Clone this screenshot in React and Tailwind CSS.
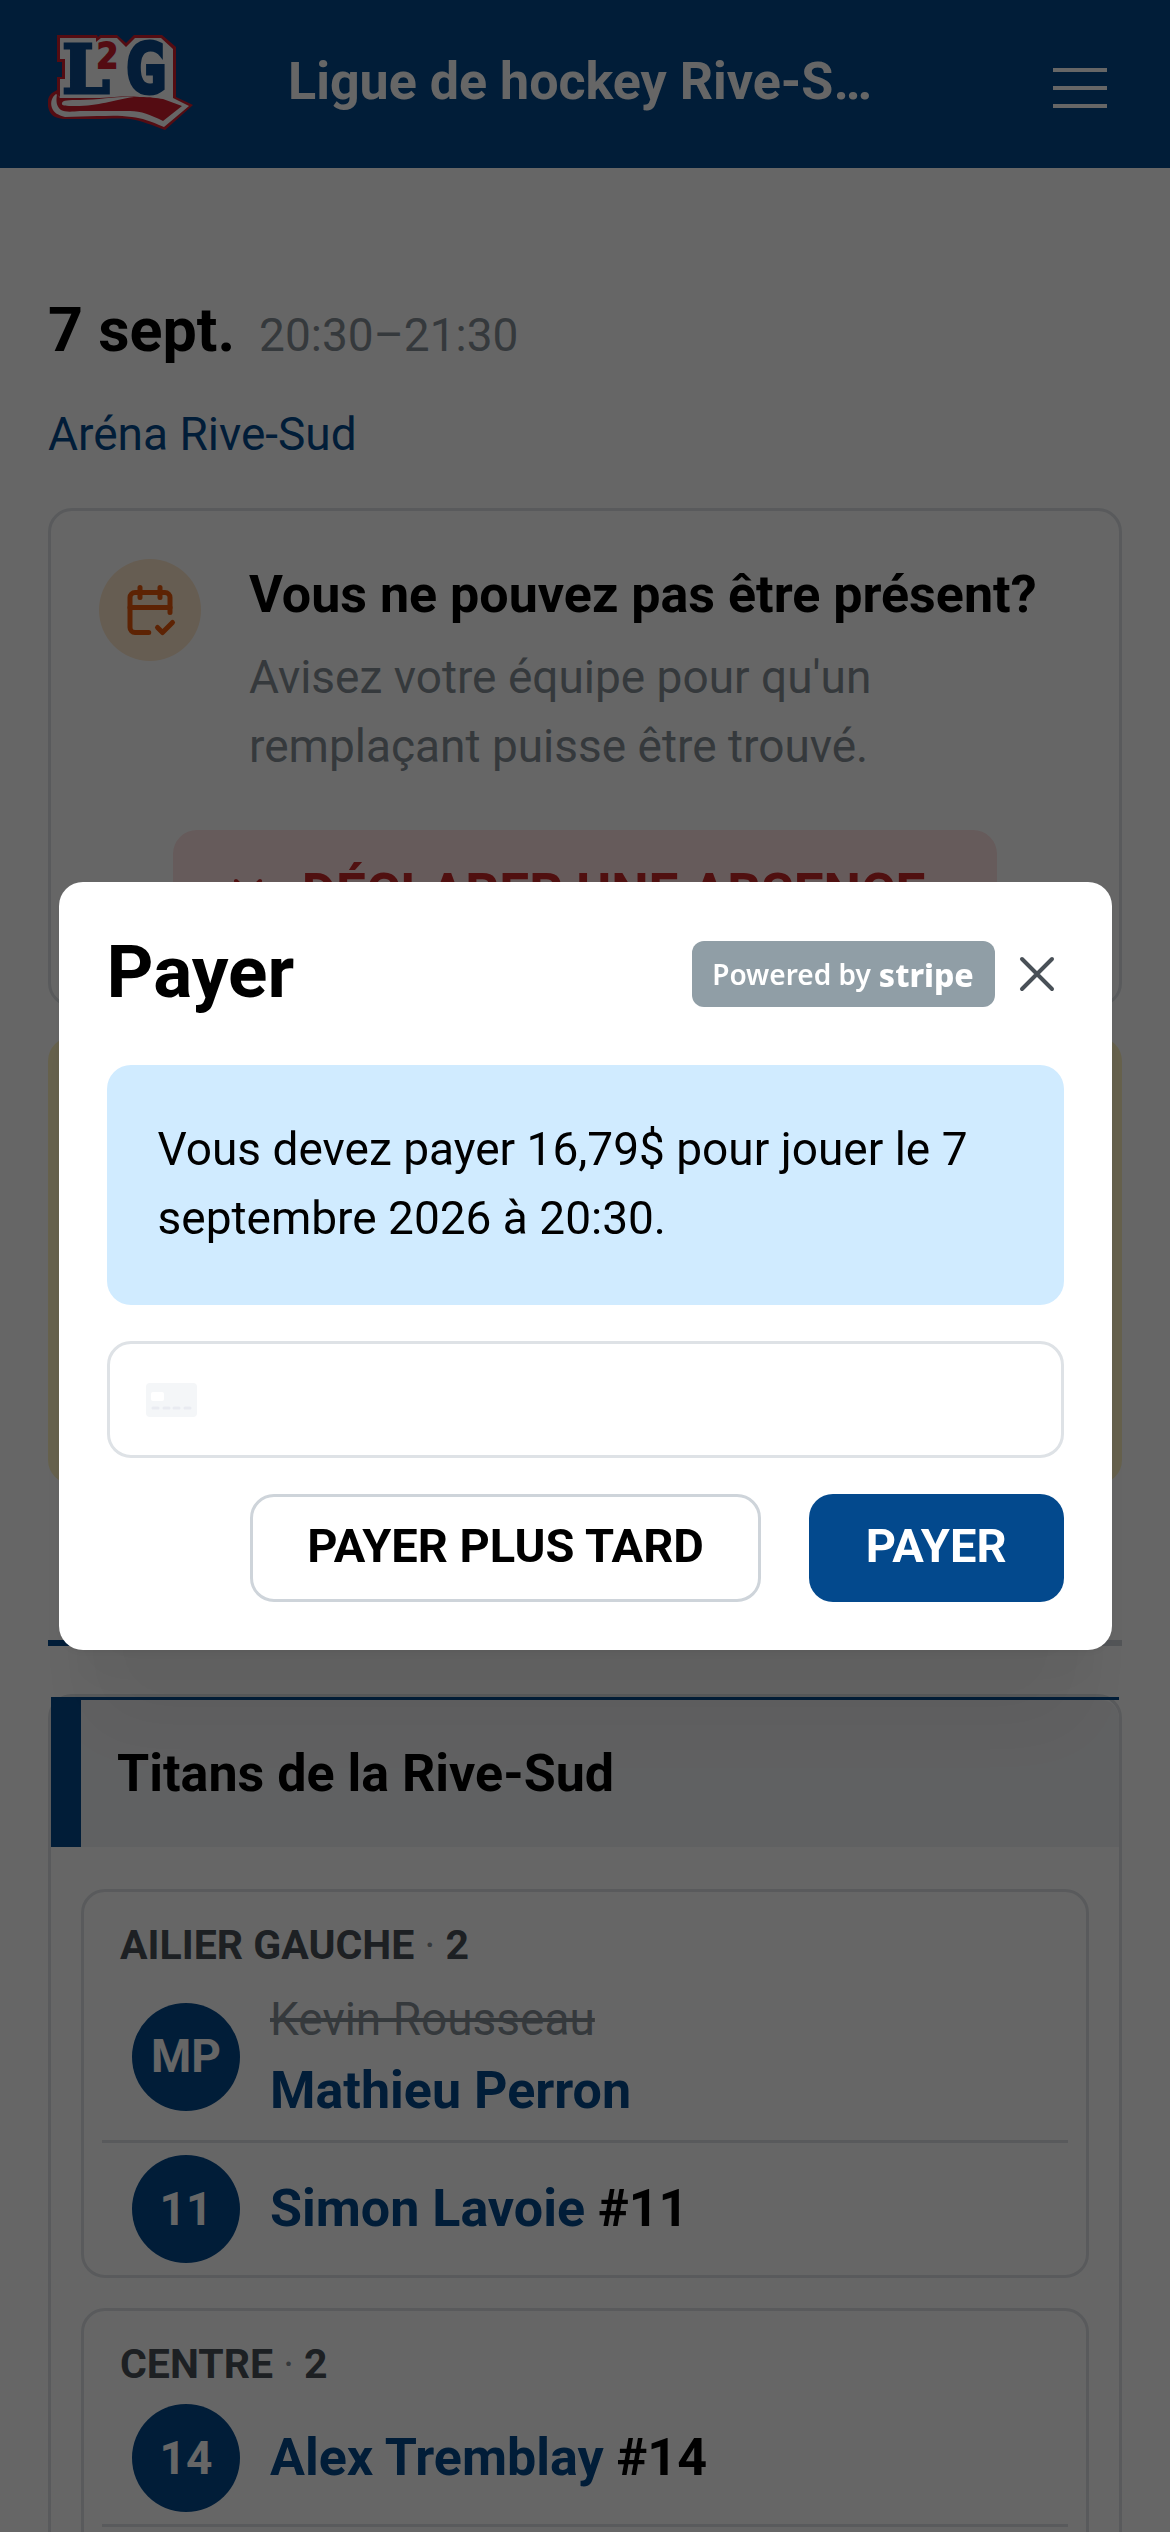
import { IconContext } from 'react-icons'
import { TbCalendarCheck, TbX } from 'react-icons/tb'

const POSITIONS = [
    {
        label: 'AILIER GAUCHE',
        players: [
            { badge: 'MP', name: 'Mathieu Perron', replaces: 'Kevin Rousseau' },
            { badge: '11', name: 'Simon Lavoie', number: 11 },
        ],
    },
    {
        label: 'CENTRE',
        players: [
            { badge: '14', name: 'Alex Tremblay', number: 14 },
            { badge: '', name: '' },
        ],
    },
]

export default function App() {
    return (
        <IconContext.Provider value={{ 'aria-hidden': true }}>
            <div className="h-screen overflow-hidden bg-white text-black text-[46px] leading-[69px] font-[Roboto,sans-serif]">
                <Header />
                <main className="px-12 pt-[120px]">
                    <div className="flex items-baseline gap-6">
                        <h1 className="text-[61px] leading-[84px] font-bold">7 sept.</h1>
                        <span className="text-[#868e96]">20:30–21:30</span>
                    </div>
                    <a href="#arena" className="mt-7 block w-fit text-[#03498d]">Aréna Rive-Sud</a>

                    <AbsenceCard />
                    <div className="mt-[30px] h-[447px] rounded-3xl bg-[#fff3bf]" />

                    {/* Tabs */}
                    <div className="mt-[156px] flex h-[6px] bg-[#ced4da]">
                        <div className="w-1/2 bg-[#03498d]" />
                    </div>

                    <TeamCard />
                </main>
            </div>
            <PayModal />
        </IconContext.Provider>
    )
}

function Header() {
    return (
        <header className="flex h-[168px] items-center bg-[#03498d] px-12 text-white">
            <a href="#accueil" className="w-[240px] shrink-0" aria-label="Accueil">
                <Logo />
            </a>
            <p className="flex-1 truncate pb-1 text-[52px] leading-[78px] font-bold">Ligue de hockey Rive-Sud</p>
            <div className="flex w-[240px] shrink-0 justify-end pr-[15px]">
                <button className="flex flex-col gap-[14px] pt-2" aria-label="Menu">
                    <span className="h-1 w-[54px] bg-white" />
                    <span className="h-1 w-[54px] bg-white" />
                    <span className="h-1 w-[54px] bg-white" />
                </button>
            </div>
        </header>
    )
}

function Logo() {
    return (
        <svg viewBox="48 24 146 120" className="h-[120px] w-[146px]" fontWeight="bold">
            {/* Red outline */}
            <path
                d="M57 35H97L98 37L100 35H117L126 43L134 35H162L176 47V97L193 105L165 130C152 125 142 121 130 119C115 118 108 119 97 119H63C56 118 51 116 49 110C47 104 47 97 52 93L57 90V77H62V62H57Z"
                fill="#d31f2f"
            />
            {/* White backing */}
            <path
                d="M60 38H96V42L101 38H117L126 47L135 38H161L173 49V98L189 106L164 127C150 121 142 118 132 117C118 115 108 116 97 116L65 117C58 115 54 113 52 108C50 102 52 97 56 94L60 97V79H65V59H60Z"
                fill="#fff"
            />
            <g fill="#0b4a8c" stroke="#0b4a8c" strokeWidth="3">
                <text x="62" y="93" fontFamily="DejaVu Serif" fontSize="68">L</text>
                <text x="125" y="93" fontFamily="DejaVu Sans Mono" fontSize="69">G</text>
            </g>
            <text x="97" y="68" fontFamily="DejaVu Sans Mono" fontSize="35" fill="#d31f2f" stroke="#d31f2f" strokeWidth="2">2</text>
            {/* Ribbon */}
            <path
                d="M57 94L60 98H100C114 97 126 96 140 97C150 97 157 98 163 99L182 106L163 121C151 115 141 111 130 111H80C70 112 65 112 61 110C56 106 56 101 57 94Z"
                fill="#d31f2f"
            />
            <path d="M62 103C63 100 68 100 80 100C100 100 118 96 134 97C112 100 100 106 75 106C66 106 61 106 62 103Z" fill="#fff" />
        </svg>
    )
}

function AbsenceCard() {
    return (
        <section className="mt-[39px] rounded-3xl border-3 border-[#dee2e6] p-12">
            <div className="flex gap-12">
                <div className="flex size-[102px] shrink-0 items-center justify-center rounded-full bg-[#ffe8cc] text-[#e8590c]">
                    <TbCalendarCheck size={60} />
                </div>
                <div>
                    <h2 className="text-[52px] leading-[72px] font-bold">Vous ne pouvez pas être présent?</h2>
                    <p className="mt-3 text-[#868e96]">Avisez votre équipe pour qu'un remplaçant puisse être trouvé.</p>
                </div>
            </div>
            <button className="mx-auto mt-[49px] flex h-[126px] items-center gap-[30px] rounded-3xl bg-[#ffe3e3] pr-[72px] pl-[51px] text-[53px] font-bold text-[#c92a2a]">
                <TbX size={48} />
                DÉCLARER UNE ABSENCE
            </button>
        </section>
    )
}

function TeamCard() {
    return (
        <section className="mt-12 rounded-3xl border-3 border-[#dee2e6]">
            <div className="border-t-3 border-l-30 border-[#03498d]">
                <h2 className="rounded-tr-[18px] bg-[#f1f3f5] p-9 text-[52px] leading-[75px] font-bold">Titans de la Rive-Sud</h2>
            </div>
            <div className="space-y-[30px] px-[30px] pt-[42px] pb-[30px]">
                {POSITIONS.map(position => (
                    <div key={position.label} className="rounded-3xl border-3 border-[#dee2e6]">
                        <h3 className="px-9 pt-[25px] text-[41px] leading-[56px] font-bold text-[#495057]">
                            {position.label} <span className="font-normal text-[#868e96]">·</span> {position.players.length}
                        </h3>
                        <ul className="mx-[18px] divide-y-3 divide-[#dee2e6]">
                            {position.players.map(player => (
                                <PlayerRow key={player.name} player={player} />
                            ))}
                        </ul>
                    </div>
                ))}
            </div>
        </section>
    )
}

function PlayerRow({ player }) {
    return (
        <li className="flex items-center gap-[30px] px-[30px] py-3">
            <div className="flex size-[108px] shrink-0 items-center justify-center rounded-full bg-[#03498d] font-bold text-white">
                {player.badge}
            </div>
            <div>
                {player.replaces && <p className="text-[#868e96] line-through">{player.replaces}</p>}
                <p className="text-[52px] leading-[74px] font-bold">
                    <a href="#joueur" className="text-[#03498d]">{player.name}</a>
                    {player.number && ` #${player.number}`}
                </p>
            </div>
        </li>
    )
}

function PayModal() {
    return (
        <div className="fixed inset-0 flex items-center justify-center bg-black/60 text-[46px] leading-[69px] text-black font-[Roboto,sans-serif]">
            <div
                role="dialog"
                aria-labelledby="pay-title"
                className="w-[90%] rounded-3xl bg-white p-12 shadow-[0_3px_9px_rgba(0,0,0,0.05),0_108px_84px_-21px_rgba(0,0,0,0.05),0_51px_51px_-21px_rgba(0,0,0,0.04)]"
            >
                <div className="flex items-center justify-between">
                    <h2 id="pay-title" className="pb-1 text-[73px] leading-[84px] font-bold">Payer</h2>
                    <div className="-mr-[15px] flex items-center">
                        <StripeBadge />
                        <button className="flex size-[84px] items-center justify-center text-[#495057]" aria-label="Fermer">
                            <svg viewBox="0 0 36 36" className="size-9" fill="none" stroke="currentColor" strokeWidth="4" strokeLinecap="round">
                                <path d="M3 3l30 30M33 3L3 33" />
                            </svg>
                        </button>
                    </div>
                </div>

                <div className="mt-[47px] rounded-3xl bg-[#d0ebff] px-[51px] pt-[50px] pb-[52px]">
                    <p>Vous devez payer 16,79$ pour jouer le 7 septembre 2026 à 20:30.</p>
                </div>

                <label className="mt-9 flex h-[117px] items-center gap-6 rounded-3xl border-3 border-[#dee2e6] px-9">
                    <CardIcon />
                    <input type="text" inputMode="numeric" aria-label="Numéro de carte" className="min-w-0 flex-1 outline-none" />
                </label>

                <div className="mt-9 flex justify-end gap-12">
                    <button className="h-[108px] rounded-3xl border-3 border-[#ced4da] px-[54px] pb-[6px] text-[47px] font-bold">PAYER PLUS TARD</button>
                    <button className="h-[108px] rounded-3xl bg-[#03498d] px-[57px] pb-[6px] text-[47px] font-bold text-white">PAYER</button>
                </div>
            </div>
        </div>
    )
}

function StripeBadge() {
    return (
        <div className="flex h-[66px] w-[303px] items-center justify-center gap-2 rounded-xl bg-[#909ea6] font-['Noto_Sans',sans-serif] text-white">
            <span className="text-[28px] font-semibold">Powered by</span>
            <span className="text-[32px] font-extrabold">stripe</span>
        </div>
    )
}

function CardIcon() {
    return (
        <svg viewBox="0 0 51 34" className="h-[34px] w-[51px] shrink-0">
            <rect width="51" height="34" rx="4" fill="#f4f6f8" />
            <rect x="5" y="9" width="13" height="9" rx="2" fill="#fff" />
            <path d="M7 25h5M18 25h5M28 25h5M39 25h5" stroke="#e9ebf1" strokeWidth="3" strokeLinecap="round" />
        </svg>
    )
}
